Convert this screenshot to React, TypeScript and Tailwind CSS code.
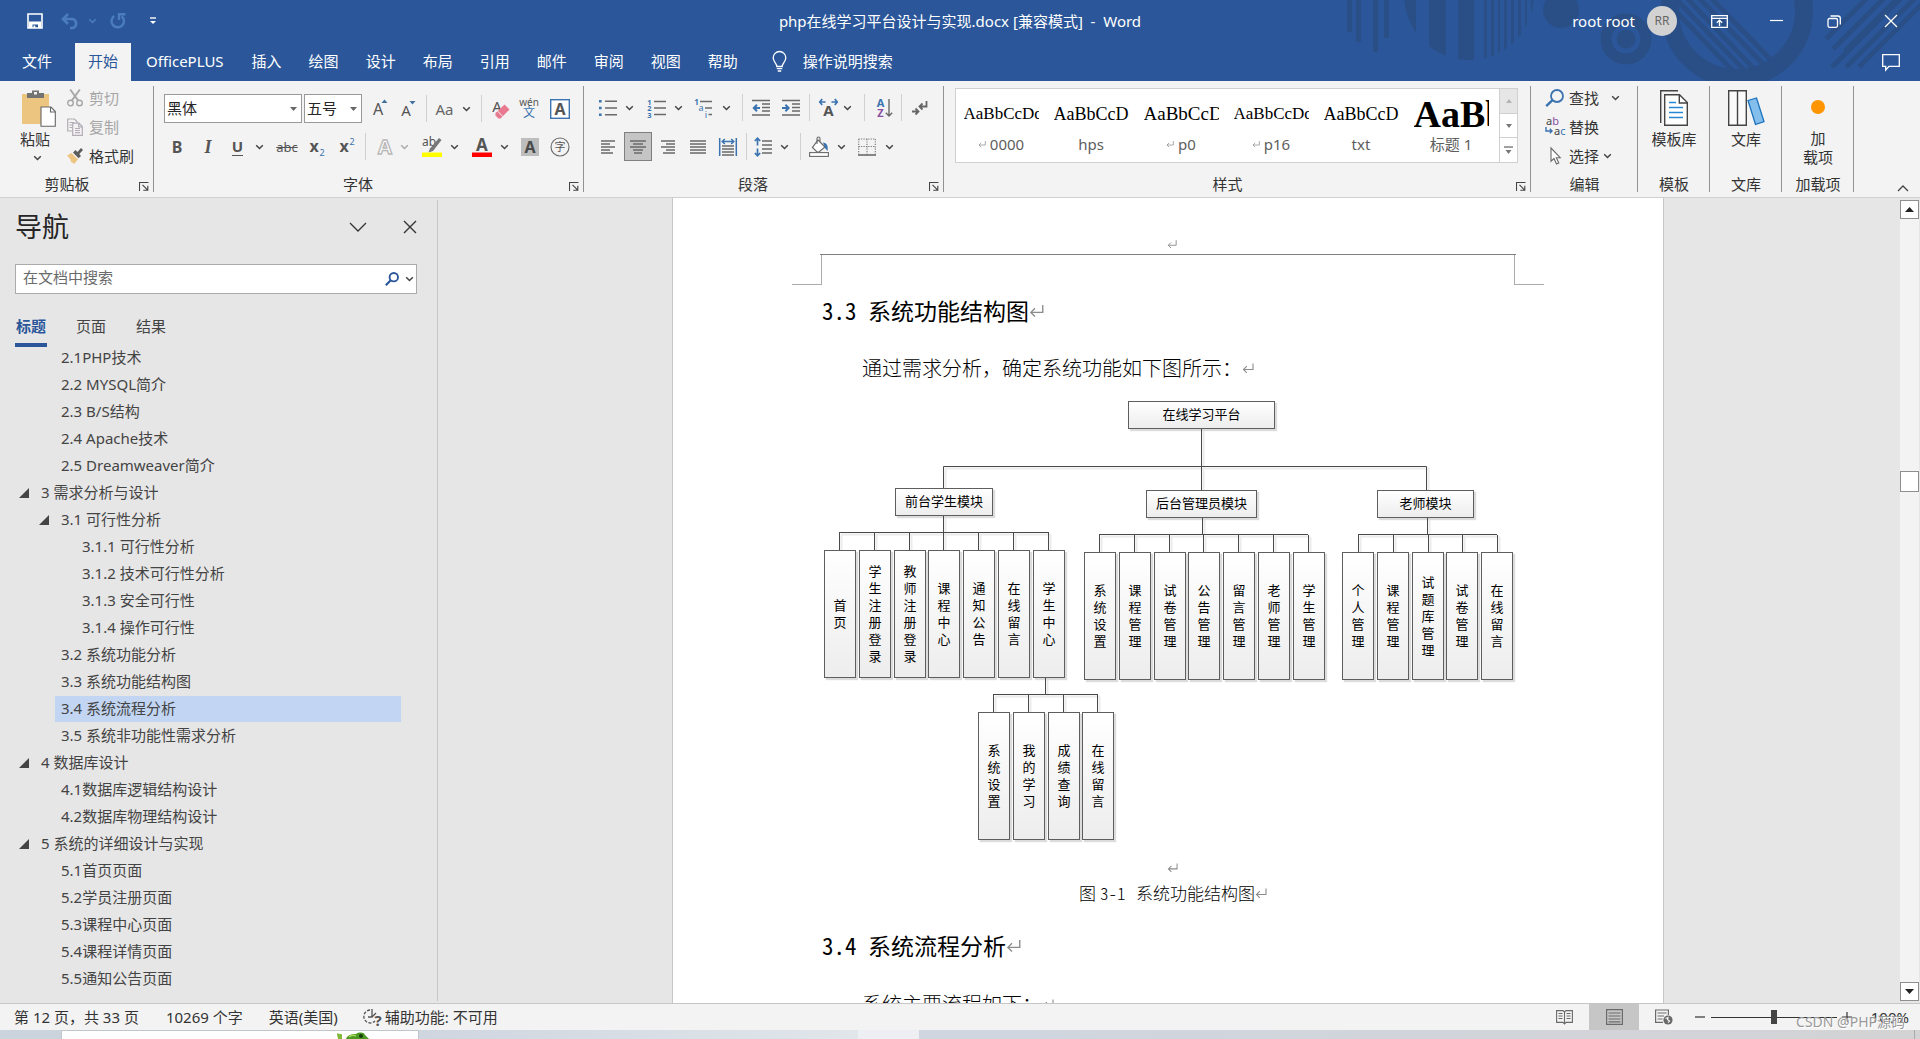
import type { ReactNode } from "react";

const UI = "font-['Noto_Sans','Noto_Sans_CJK_SC',sans-serif]";
const LABEL_FONT = "'Noto Sans','Noto Sans CJK SC',sans-serif";

/* ---------- small shared pieces ---------- */

function Chevron({ className = "text-[#444]" }: { className?: string }) {
  return (
    <svg width="9" height="6" viewBox="0 0 9 6" fill="none" className={`shrink-0 ${className}`} aria-hidden="true">
      <path d="M1.2 1.2 4.5 4.5 7.8 1.2" stroke="currentColor" strokeWidth="1.5" />
    </svg>
  );
}

function Pilcrow({ size = 12 }: { size?: number }) {
  return (
    <svg width={size} height={size} viewBox="0 0 12 12" fill="none" className="shrink-0 text-[#8c8c8c]" aria-hidden="true">
      <path d="M11 1.5V7.5H1.5M4.8 4.2 1.5 7.5 4.8 10.8" stroke="currentColor" strokeWidth="1.1" />
    </svg>
  );
}

function Tool({ label, className, active, gap = "gap-2", children }: { label: string; className: string; active?: boolean; gap?: string; children: ReactNode }) {
  return (
    <button
      type="button"
      aria-label={label}
      title={label}
      className={`flex h-[29px] shrink-0 items-center justify-center ${gap} ${active ? "border border-[#7f7f7f] bg-[#c5c5c5]" : ""} ${className}`}
    >
      {children}
    </button>
  );
}

function Sep({ className = "" }: { className?: string }) {
  return <span className={`h-[27px] w-px shrink-0 bg-[#d0d0d0] ${className}`} />;
}

function Launcher() {
  return (
    <button type="button" aria-label="对话框启动器" className="absolute right-[5px] bottom-[6px]">
      <svg width="10" height="9" viewBox="0 0 10 9" fill="none" stroke="#444" aria-hidden="true">
        <path d="M.5 9V.5H9.5M3.5 2.8 8.5 7.8M8.8 3.8V8.3H4.3" strokeWidth="1.1" />
      </svg>
    </button>
  );
}

function Group({ label, className, launcher, children }: { label: string; className: string; launcher?: boolean; children: ReactNode }) {
  return (
    <section
      aria-label={label}
      className={`relative flex h-full shrink-0 flex-col after:absolute after:top-[5px] after:right-0 after:bottom-[5px] after:w-px after:bg-[#929292] ${className}`}
    >
      <div className="min-h-0 flex-1">{children}</div>
      <div className="h-[24px] text-center leading-[23px]">{label}</div>
      {launcher && <Launcher />}
    </section>
  );
}

function Lines({ d, color = "#6a6a6a" }: { d: string; color?: string }) {
  return <path d={d} stroke={color} strokeWidth="1.4" fill="none" />;
}

function Svg({ w, h, children }: { w: number; h: number; children: ReactNode }) {
  return (
    <svg width={w} height={h} viewBox={`0 0 ${w} ${h}`} fill="none" className="shrink-0 overflow-visible" aria-hidden="true">
      {children}
    </svg>
  );
}

function T({ x, y, s, fill = "#555", bold, children }: { x: number; y: number; s: number; fill?: string; bold?: boolean; children: string }) {
  return (
    <text x={x} y={y} fontSize={s} fill={fill} fontFamily={LABEL_FONT} fontWeight={bold ? 700 : 400} textAnchor="middle">
      {children}
    </text>
  );
}

/* ---------- title bar ---------- */

function Backdrop() {
  const c = "#2a4f86";
  return (
    <svg width="660" height="81" viewBox="0 0 660 81" className="absolute top-0 right-0" aria-hidden="true">
      <defs>
        <clipPath id="disc"><circle cx="209" cy="-5" r="65" /></clipPath>
        <clipPath id="hole"><circle cx="477" cy="12" r="60" /></clipPath>
      </defs>
      <path fill={c} d="M87 0h5v32h-5zM96 0h5v42h-5zM113 0h5v52h-5zM124 0h5v38h-5z" />
      <g clipPath="url(#disc)">
        <path fill={c} d="M144 0h12v60h-12zM169 0h17v60h-17zM198 0h16v61h-16zM224 0h3v60h-3zM231 0h3v60h-3zM238 0h2v60h-2zM244 0h3v60h-3zM251 0h3v60h-3zM258 0h3v60h-3zM265 0h2v60h-2zM271 0h3v60h-3z" />
      </g>
      <circle cx="301" cy="10" r="18" fill={c} />
      <circle cx="366" cy="39" r="20" fill="none" stroke={c} strokeWidth="11" />
      <circle cx="366" cy="39" r="9.5" fill={c} />
      <circle cx="477" cy="11" r="67" fill="none" stroke={c} strokeWidth="18" />
      <g clipPath="url(#hole)" stroke={c} strokeWidth="5">
        <path d="M451-2 515 64M439-2 505 66M427-2 495 70M415-2 485 71M405 0 475 73" />
      </g>
      <g stroke={c} strokeWidth="5">
        <path d="M566 39 607-2M573 49 624-2M585 51 638-2M572 67 641-2M586 67 655-2M599 67 668-2" />
      </g>
    </svg>
  );
}

const TABS = ["插入", "绘图", "设计", "布局", "引用", "邮件", "审阅", "视图", "帮助"];

function Header() {
  return (
    <header className="relative flex h-[81px] shrink-0 flex-col bg-[#2b579a] text-white">
      <Backdrop />
      <div className="relative grid h-[43px] grid-cols-[1fr_auto_1fr] items-center pb-px">
        <div className="flex items-center pl-[27px]">
          <button type="button" aria-label="保存">
            <Svg w={16} h={16}>
              <path d="M1 1H15V15H1Z" stroke="#fff" strokeWidth="1.6" />
              <path d="M2 8.5H14V15H11V11.5H5.5V15H2Z" fill="#fff" />
              <path d="M6.5 12.5H8.3V15H6.5Z" fill="#fff" />
            </Svg>
          </button>
          <button type="button" aria-label="撤消" className="ml-[18px] flex items-center gap-[9px]">
            <Svg w={18} h={16}>
              <path d="M2 6H11.5A4.6 4.6 0 0 1 11.5 15H9M7 1 2 6 7 11" stroke="#4b7cbd" strokeWidth="2.6" />
            </Svg>
            <Chevron className="text-[#4b7cbd]" />
          </button>
          <button type="button" aria-label="恢复" className="ml-[12px]">
            <Svg w={18} h={16}>
              <path d="M5.2 3A6.2 6.2 0 1 0 12.5 3.2" stroke="#4b7cbd" strokeWidth="2.4" />
              <path d="M10 7V1.3H16.5" stroke="#4b7cbd" strokeWidth="2.4" />
            </Svg>
          </button>
          <button type="button" aria-label="自定义快速访问工具栏" className="ml-[23px]">
            <Svg w={6} h={8}>
              <path d="M0 1H6" stroke="#fff" strokeWidth="1.4" />
              <path d="M0 4H6L3 7Z" fill="#fff" />
            </Svg>
          </button>
        </div>
        <h1 className="text-[15px] leading-5 whitespace-pre">php在线学习平台设计与实现.docx [兼容模式]&nbsp; -&nbsp; Word</h1>
        <div className="flex items-center justify-end pr-[22px]">
          <span>root root</span>
          <span className="ml-[12px] flex size-[30px] items-center justify-center rounded-full bg-[#d2d2d2] text-[12px] text-[#666]">RR</span>
          <button type="button" aria-label="功能区显示选项" className="ml-[34px]">
            <Svg w={17} h={13}>
              <path d="M.7.7H16.3V12.3H.7ZM1 3.4H16" stroke="#fff" strokeWidth="1.3" />
              <path d="M8.5 11V5.5M5.8 7.8 8.5 5.2 11.2 7.8" stroke="#fff" strokeWidth="1.3" />
            </Svg>
          </button>
          <button type="button" aria-label="最小化" className="ml-[42px]">
            <Svg w={14} h={13}><path d="M0 5.5H13" stroke="#fff" strokeWidth="1.2" /></Svg>
          </button>
          <button type="button" aria-label="向下还原" className="ml-[43px]">
            <Svg w={15} h={13}>
              <rect x="1" y="3.5" width="9.5" height="8.8" rx="1.5" stroke="#fff" strokeWidth="1.3" />
              <path d="M3.5 1H11A2.3 2.3 0 0 1 13.3 3.3V9.5" stroke="#fff" strokeWidth="1.3" />
            </Svg>
          </button>
          <button type="button" aria-label="关闭" className="ml-[42px]">
            <Svg w={14} h={14}><path d="M1 1 13 13M13 1 1 13" stroke="#fff" strokeWidth="1.3" /></Svg>
          </button>
        </div>
      </div>
      <nav className="relative flex flex-1 items-stretch gap-px" aria-label="功能区选项卡">
        <button type="button" className="px-[22px] pb-[2px]">文件</button>
        <button type="button" className="bg-[#f3f3f3] px-[13px] pb-[2px] text-[#2b579a]">开始</button>
        <button type="button" className="px-[14px] pb-[2px]">OfficePLUS</button>
        {TABS.map((t) => (
          <button key={t} type="button" className="px-[13px] pb-[2px]">{t}</button>
        ))}
        <button type="button" className="ml-5 flex items-center gap-4 pb-[2px]">
          <Svg w={15} h={21}>
            <path d="M4.8 15.5C4.8 12 1.2 11 1.2 6.8A6.2 6.2 0 0 1 13.8 6.8C13.8 11 10.2 12 10.2 15.5Z" stroke="#fff" strokeWidth="1.3" />
            <path d="M4.8 17.7H10.2M5.8 20H9.2" stroke="#fff" strokeWidth="1.3" />
          </Svg>
          操作说明搜索
        </button>
        <button type="button" aria-label="批注" className="mr-5 ml-auto">
          <Svg w={18} h={17}><path d="M.7.7H17.3V12.3H7L3.7 16V12.3H.7Z" stroke="#fff" strokeWidth="1.3" /></Svg>
        </button>
      </nav>
    </header>
  );
}

/* ---------- ribbon ---------- */

function Combo({ label, value, className }: { label: string; value: string; className: string }) {
  return (
    <div className={`relative h-[29px] shrink-0 border border-[#999] bg-white ${className}`}>
      <select aria-label={label} className="h-full w-full appearance-none bg-transparent pb-[2px] pl-[2px] text-[15px] text-[#262626] outline-none">
        <option>{value}</option>
      </select>
      <svg width="7" height="4" viewBox="0 0 7 4" className="pointer-events-none absolute top-3 right-[4px]" aria-hidden="true">
        <path d="M0 0H7L3.5 4Z" fill="#666" />
      </svg>
    </div>
  );
}

function Clipboard() {
  return (
    <Group label="剪贴板" className="w-[154px] [&>div:nth-child(2)]:pr-5" launcher>
      <div className="flex pt-[2px] pl-5">
        <button type="button" className="flex w-[36px] flex-col items-start pt-[6px]">
          <Svg w={36} h={38}>
            <path d="M2 5H29V35H2Z" fill="#ecc681" />
            <path d="M7 9V4H12V1.5H19V4H24V9Z" fill="#737373" />
            <path d="M14 3H17V5.5H14Z" fill="#f3f3f3" />
            <path d="M21 18H31L35.3 22.5V37.3H21Z" fill="#fff" stroke="#666" strokeWidth="1.1" />
            <path d="M30.5 18V23H35.3" stroke="#666" strokeWidth="1.1" />
          </Svg>
          <span className="mt-[2px] leading-5 whitespace-nowrap">粘贴</span>
          <span className="mt-[6px] ml-[13px] flex"><Chevron /></span>
        </button>
        <div className="ml-[11px] flex flex-col">
          <button type="button" disabled className="flex h-[29px] items-center gap-[6px] text-[#a6a6a6]">
            <Svg w={16} h={18}>
              <circle cx="3.5" cy="14" r="2.8" stroke="#a6a6a6" strokeWidth="1.4" />
              <circle cx="12.5" cy="14" r="2.8" stroke="#a6a6a6" strokeWidth="1.4" />
              <path d="M3.2.5 11.2 11.6M12.8.5 4.8 11.6" stroke="#a6a6a6" strokeWidth="1.8" />
            </Svg>
            剪切
          </button>
          <button type="button" disabled className="flex h-[29px] items-center gap-[6px] text-[#a6a6a6]">
            <Svg w={16} h={18}>
              <path d="M10 5V3.5L7.5 1H.7V13H5M2.5 4.5H7M2.5 7H5M2.5 9.5H5" stroke="#b3adb6" strokeWidth="1.2" />
              <path d="M5.7 5.2H12L15.3 8.5V17.3H5.7ZM11.7 5.5V8.8H15M8 10.5H13M8 12.5H13M8 14.7H13" stroke="#b3adb6" strokeWidth="1.2" />
            </Svg>
            复制
          </button>
          <button type="button" className="flex h-[29px] items-center gap-[6px]">
            <Svg w={16} h={16}>
              <path d="M0 7.5 4.5 5 11 11.5 7 16 5.5 14.5 4 14 3.5 11.5Z" fill="#ecc681" />
              <path d="M6 4.5 8.5 2 10.5 4 14 0 16 2 12.3 6 14 8 11.5 10.3Z" fill="#5c5c5c" />
            </Svg>
            格式刷
          </button>
        </div>
      </div>
    </Group>
  );
}

function FontGroup() {
  return (
    <Group label="字体" className="w-[430px] [&>div:nth-child(2)]:pr-[22px]" launcher>
      <div className="flex items-center pt-[13px] pl-[10px]">
        <Combo label="字体" value="黑体" className="w-[138px]" />
        <Combo label="字号" value="五号" className="ml-[2px] w-[58px]" />
        <Tool label="增大字号" className="ml-1 w-7">
          <Svg w={16} h={20}><T x={6} y={16} s={16}>A</T><path d="M9.5 4 12.5.5 15.5 4Z" fill="#41719c" /></Svg>
        </Tool>
        <Tool label="减小字号" className="w-7">
          <Svg w={16} h={20}><T x={6} y={17} s={15}>A</T><path d="M9.5 2 12.5 5.5 15.5 2Z" fill="#41719c" /></Svg>
        </Tool>
        <Sep className="ml-1" />
        <Tool label="更改大小写" className="w-[52px] text-[#666]"><span>Aa</span><Chevron /></Tool>
        <Sep className="ml-[2px]" />
        <Tool label="清除所有格式" className="ml-[5px] w-7">
          <Svg w={20} h={20}>
            <T x={6} y={13} s={15}>A</T>
            <path d="M4.5 14 13.5 5.5 18.5 10.5 9.5 19.5H7.5L4.5 16.5Z" fill="#e8798f" />
            <path d="M6.5 12 11.5 17.2" stroke="#f3f3f3" />
          </Svg>
        </Tool>
        <Tool label="拼音指南" className="w-7">
          <Svg w={20} h={22}><T x={10} y={8} s={10}>wén</T><T x={10} y={19} s={12} fill="#3a73b0">文</T></Svg>
        </Tool>
        <Tool label="字符边框" className="ml-[3px] w-7">
          <Svg w={20} h={20}><rect x=".7" y=".7" width="18.6" height="18.6" fill="#fff" stroke="#3a73b0" strokeWidth="1.4" /><T x={10} y={15.5} s={16} bold>A</T></Svg>
        </Tool>
      </div>
      <div className="mt-[9px] flex items-center pl-[9px]">
        <Tool label="加粗" className="w-7 text-[16px] font-bold text-[#555]">B</Tool>
        <Tool label="倾斜" className="w-[34px] text-[#555]"><span className="font-['Liberation_Serif',serif] text-[18px] font-bold italic">I</span></Tool>
        <Tool label="下划线" gap="gap-3" className="w-[46px] text-[#555]"><span className="border-b border-[#555] text-[15px] leading-[18px] font-bold">U</span><Chevron /></Tool>
        <Tool label="删除线" className="w-8 text-[13px] text-[#555] line-through">abc</Tool>
        <Tool label="下标" className="w-[29px]"><Svg w={17} h={20}><T x={5} y={15} s={16} bold>x</T><T x={13} y={19} s={9} fill="#3a73b0">2</T></Svg></Tool>
        <Tool label="上标" className="w-[30px]"><Svg w={17} h={20}><T x={5} y={15} s={16} bold>x</T><T x={13} y={8} s={9} fill="#3a73b0">2</T></Svg></Tool>
        <Sep className="ml-[3px]" />
        <Tool label="文本效果" gap="gap-[6px]" className="ml-[6px] w-[40px]">
          <Svg w={18} h={20}>
            <text x="9" y="17" fontSize="20" fontWeight="700" textAnchor="middle" fill="#fff" stroke="#b9b9b9" strokeWidth="1.4" fontFamily={LABEL_FONT}>A</text>
          </Svg>
          <Chevron className="text-[#aaa]" />
        </Tool>
        <Tool label="突出显示" className="ml-[7px] w-[42px]">
          <Svg w={20} h={20}>
            <T x={7} y={9} s={12}>ab</T>
            <path d="M17 1 19.5 3 11 14 6.5 15.5 8 11.5Z" fill="#777" />
            <path d="M0 15.5H20V20H0Z" fill="#ffff00" />
          </Svg>
          <Chevron />
        </Tool>
        <Tool label="字体颜色" className="ml-[8px] w-[42px]">
          <Svg w={20} h={20}><T x={10} y={13.5} s={17} bold>A</T><path d="M0 15.5H20V20H0Z" fill="#ff0000" /></Svg>
          <Chevron />
        </Tool>
        <Tool label="字符底纹" className="ml-[5px] w-7">
          <Svg w={18} h={18}><rect width="18" height="18" fill="#bdbdbd" /><T x={9} y={15} s={16} bold fill="#4a4a4a">A</T></Svg>
        </Tool>
        <Tool label="带圈字符" className="ml-[2px] w-7">
          <Svg w={20} h={20}><circle cx="10" cy="10" r="9" stroke="#6a6a6a" strokeWidth="1.1" /><T x={10} y={14} s={11}>字</T></Svg>
        </Tool>
      </div>
    </Group>
  );
}

function ParagraphGroup() {
  return (
    <Group label="段落" className="w-[360px] [&>div:nth-child(2)]:pr-[22px]" launcher>
      <div className="flex items-center pt-[12px] pl-[14px]">
        <Tool label="项目符号" className="w-9">
          <Svg w={18} h={18}>
            <path d="M0 1h2.6v2.6H0zM0 7.7h2.6v2.6H0zM0 14.4h2.6V17H0z" fill="#3a73b0" />
            <Lines d="M6 2.3H18M6 9H18M6 15.7H18" />
          </Svg>
          <Chevron />
        </Tool>
        <Tool label="编号" className="ml-[13px] w-9">
          <Svg w={19} h={20}>
            <T x={2.5} y={7} s={7.5} fill="#3a73b0" bold>1</T><T x={2.5} y={13.4} s={7.5} fill="#3a73b0" bold>2</T><T x={2.5} y={19.8} s={7.5} fill="#3a73b0" bold>3</T>
            <Lines d="M7 3.5H19M7 10H19M7 16.5H19" />
          </Svg>
          <Chevron />
        </Tool>
        <Tool label="多级列表" className="ml-[11px] w-9">
          <Svg w={20} h={20}>
            <T x={2.5} y={7} s={8} fill="#3a73b0" bold>1</T><T x={7} y={13} s={9} fill="#3a73b0">a</T><T x={12} y={19.5} s={9} fill="#3a73b0">i</T>
            <Lines d="M6 3.5H18M11 10H18M14.5 16.5H18" />
          </Svg>
          <Chevron />
        </Tool>
        <Sep className="ml-[12px]" />
        <Tool label="减少缩进量" className="ml-1 w-7">
          <Svg w={18} h={18}><Lines d="M0 1.5H18M10 5H18M10 8.5H18M10 12H18M0 16H18" /><path d="M8 9H2M5 5.8 1.8 9 5 12.2" stroke="#3a73b0" strokeWidth="2" /></Svg>
        </Tool>
        <Tool label="增加缩进量" className="ml-[2px] w-7">
          <Svg w={18} h={18}><Lines d="M0 1.5H18M10 5H18M10 8.5H18M10 12H18M0 16H18" /><path d="M0 9H6M3.4 5.8 6.6 9 3.4 12.2" stroke="#3a73b0" strokeWidth="2" /></Svg>
        </Tool>
        <Sep className="ml-[4px]" />
        <Tool label="中文版式" gap="gap-[5px]" className="ml-[5px] w-[40px]">
          <Svg w={19} h={20}>
            <T x={9.5} y={18} s={15} bold>A</T>
            <path d="M0 4H6.5M3.2 1 .8 4 3.2 7M19 4H12.5M15.8 1 18.2 4 15.8 7" stroke="#3a73b0" strokeWidth="1.7" />
          </Svg>
          <Chevron />
        </Tool>
        <Sep className="ml-[9px]" />
        <Tool label="排序" className="ml-[5px] w-7">
          <Svg w={17} h={20}>
            <T x={4.5} y={9} s={11} fill="#3a73b0" bold>A</T><T x={4.5} y={19} s={11} fill="#8a4fa3" bold>Z</T>
            <Lines d="M13 1V18M9.8 14.8 13 18 16.2 14.8" />
          </Svg>
        </Tool>
        <Sep className="ml-[3px]" />
        <Tool label="显示编辑标记" className="ml-[3px] w-7">
          <Svg w={17} h={16}>
            <path d="M15.5 1V6.5H9M11.5 3.5 8.5 6.5 11.5 9.5" stroke="#666" strokeWidth="1.8" />
            <path d="M1 11.5H7M4.5 8.5 7.5 11.5 4.5 14.5" stroke="#666" strokeWidth="1.8" />
          </Svg>
        </Tool>
      </div>
      <div className="mt-[10px] flex items-center pl-[10px]">
        <Tool label="左对齐" className="w-7"><Svg w={14} h={14}><Lines d="M0 1H14M0 4H9M0 7H14M0 10H9M0 13H12" /></Svg></Tool>
        <Tool label="居中" className="ml-[2px] w-7" active><Svg w={16} h={14}><Lines d="M0 1H16M3 4H13M0 7H16M3 10H13M4 13H12" /></Svg></Tool>
        <Tool label="右对齐" className="ml-[2px] w-7"><Svg w={14} h={14}><Lines d="M0 1H14M5 4H14M0 7H14M5 10H14M2 13H14" /></Svg></Tool>
        <Tool label="两端对齐" className="ml-[2px] w-7"><Svg w={16} h={14}><Lines d="M0 1H16M0 4H16M0 7H16M0 10H16M0 13H16" /></Svg></Tool>
        <Tool label="分散对齐" className="ml-[2px] w-7">
          <Svg w={18} h={18}>
            <path d="M.7 0V18M17.3 0V18M3 3.5H15M5.8 1 3.2 3.5 5.8 6M12.2 1 14.8 3.5 12.2 6" stroke="#3a73b0" strokeWidth="1.5" />
            <Lines d="M3 8H15M3 11H15M3 14H15M3 17H15" />
          </Svg>
        </Tool>
        <Sep className="ml-[4px]" />
        <Tool label="行和段落间距" className="ml-[4px] w-[40px]">
          <Svg w={18} h={20}>
            <path d="M3.5 1V8.5M3.5 11.5V19M.8 4 3.5 1.2 6.2 4M.8 16 3.5 18.8 6.2 16" stroke="#3a73b0" strokeWidth="1.7" />
            <Lines d="M8 4H18M8 8H18M8 12H18M8 16H18" />
          </Svg>
          <Chevron />
        </Tool>
        <Sep className="ml-[9px]" />
        <Tool label="底纹" className="ml-[5px] w-[42px]">
          <Svg w={20} h={20}>
            <path d="M9 3 16 10 10 15H8L3.5 10.5Z" fill="#fff" stroke="#6a6a6a" strokeWidth="1.2" />
            <path d="M8 7V1.5A1.2 1.2 0 0 1 11 1.5V5" stroke="#6a6a6a" strokeWidth="1.1" />
            <path d="M14 5.5C17.5 5.5 19.5 9 18.5 14L16 11Z" fill="#3a73b0" />
            <rect x=".6" y="15.6" width="18.8" height="3.8" fill="#fff" stroke="#6a6a6a" strokeWidth="1.1" />
          </Svg>
          <Chevron />
        </Tool>
        <Tool label="边框" gap="gap-[9px]" className="ml-[7px] w-[42px]">
          <Svg w={18} h={18}>
            <path d="M.7 1H17.3M.7 8.5H17.3M.7 1V16M9 1V16M17.3 1V16" stroke="#777" strokeWidth="1.1" strokeDasharray="1.2 1.2" />
            <path d="M0 17H18" stroke="#555" strokeWidth="1.4" />
          </Svg>
          <Chevron />
        </Tool>
      </div>
    </Group>
  );
}

const STYLES = [
  { name: "0000", mark: true, sample: "AaBbCcDd", cls: "text-[17px]" },
  { name: "hps", mark: false, sample: "AaBbCcDd", cls: "text-[18px]" },
  { name: "p0", mark: true, sample: "AaBbCcDd", cls: "text-[19px]" },
  { name: "p16", mark: true, sample: "AaBbCcDd", cls: "text-[17px]" },
  { name: "txt", mark: false, sample: "AaBbCcDd", cls: "text-[18px]" },
  { name: "标题 1", mark: false, sample: "AaBbC", cls: "text-[38px] font-bold" },
];

function StylesGroup() {
  return (
    <Group label="样式" className="min-w-0 flex-1 [&>div:nth-child(2)]:pr-5" launcher>
      <div className="mt-[7px] mr-[13px] ml-[11px] flex h-[75px] border border-[#d0d0d0] bg-white">
        <div className="flex min-w-0 flex-1 overflow-hidden">
          {STYLES.map((s) => (
            <button key={s.name} type="button" className="flex w-[90px] shrink-0 flex-col items-center">
              <span className="flex h-[44px] w-[75px] items-center overflow-hidden">
                <span className={`pt-[5px] leading-[42px] whitespace-nowrap text-black font-['Liberation_Serif',serif] ${s.cls}`}>{s.sample}</span>
              </span>
              <span className="flex items-center gap-1 leading-[22px] text-[#5e5e5e]">
                {s.mark && <Pilcrow size={8} />}
                {s.name}
              </span>
            </button>
          ))}
        </div>
        <div className="flex w-[18px] flex-col border-l border-[#d0d0d0]">
          <button type="button" aria-label="上一行" className="flex flex-1 items-center justify-center bg-[#e6e6e6]"><Svg w={6} h={4}><path d="M0 4 3 0 6 4Z" fill="#b5b5b5" /></Svg></button>
          <button type="button" aria-label="下一行" className="flex flex-1 items-center justify-center border-y border-[#d0d0d0]"><Svg w={6} h={4}><path d="M0 0H6L3 4Z" fill="#777" /></Svg></button>
          <button type="button" aria-label="其他" className="flex flex-1 items-center justify-center"><Svg w={9} h={8}><path d="M0 1H9" stroke="#777" strokeWidth="1.4" /><path d="M1.5 4H7.5L4.5 8Z" fill="#777" /></Svg></button>
        </div>
      </div>
    </Group>
  );
}

function TrailingGroups() {
  return (
    <>
      <Group label="编辑" className="w-[107px]">
        <div className="flex flex-col pt-[2px] pl-[14px]">
          <button type="button" className="flex h-[29px] items-center gap-[4px]">
            <Svg w={20} h={18}><circle cx="12" cy="7" r="6" stroke="#3a73b0" strokeWidth="1.8" /><path d="M7.5 11.2 1.2 17.2" stroke="#3a73b0" strokeWidth="2.4" /></Svg>
            查找<span className="ml-2 flex"><Chevron /></span>
          </button>
          <button type="button" className="flex h-[29px] items-center gap-[4px]">
            <Svg w={20} h={20}>
              <text x="1" y="8" fontSize="11" fontFamily={LABEL_FONT} fill="#444">a<tspan fill="#8a4fa3">b</tspan></text>
              <text x="9" y="18" fontSize="11" fontFamily={LABEL_FONT} fill="#444">a<tspan fill="#3a73b0">c</tspan></text>
              <path d="M1 10V14H7M4.8 11.8 7 14 4.8 16.2" stroke="#3a73b0" strokeWidth="1.4" />
            </Svg>
            替换
          </button>
          <button type="button" className="flex h-[29px] items-center gap-[4px]">
            <Svg w={20} h={18}><path d="M6 1V14.2L9 11.5 11.5 17 13.8 16 11.3 10.7H15.2Z" fill="#fff" stroke="#6a6a6a" strokeWidth="1.1" /></Svg>
            选择<Chevron />
          </button>
        </div>
      </Group>
      <Group label="模板" className="w-[72px]">
        <button type="button" className="flex w-full flex-col items-center pt-[9px]">
          <Svg w={28} h={36}>
            <path d="M.7 33V.7H18" stroke="#444" strokeWidth="1.4" />
            <path d="M4.7 4.7H19.5L27.3 12.5V35.3H4.7Z" fill="#fff" stroke="#444" strokeWidth="1.4" />
            <path d="M19.3 4.7V13H27.3" stroke="#444" strokeWidth="1.4" />
            <path d="M9 12.5H16M9 17.5H23M9 22.5H23M9 27.5H23" stroke="#2a86d1" strokeWidth="1.3" />
          </Svg>
          <span className="mt-[3px] leading-5">模板库</span>
        </button>
      </Group>
      <Group label="文库" className="w-[72px]">
        <button type="button" className="flex w-full flex-col items-center pt-[9px]">
          <Svg w={37} h={36}>
            <path d="M.7.7H18.3V35.3H.7ZM9.5.7V35.3" fill="#fafafa" stroke="#444" strokeWidth="1.4" />
            <path d="M20 10.5 28.5 8 36 31.5 27.5 34.5Z" fill="#83beec" stroke="#1a72bd" strokeWidth="1.3" />
          </Svg>
          <span className="mt-[3px] leading-5">文库</span>
        </button>
      </Group>
      <Group label="加载项" className="w-[72px]">
        <button type="button" className="flex w-full flex-col items-center pt-[19px]">
          <span className="size-[14px] rounded-full bg-[#ff9500]" />
          <span className="mt-[15px] leading-[19px]">加<br />载项</span>
        </button>
      </Group>
      <div className="flex w-[66px] shrink-0 items-end justify-end pr-[11px] pb-[5px]">
        <button type="button" aria-label="折叠功能区"><Svg w={12} h={7}><path d="M1 6 6 1 11 6" stroke="#444" strokeWidth="1.3" /></Svg></button>
      </div>
    </>
  );
}

/* ---------- navigation pane ---------- */

type Row = { text: string; level: number; open?: boolean; selected?: boolean };
const OUTLINE: Row[] = [
  { text: "2.1PHP技术", level: 2 },
  { text: "2.2 MYSQL简介", level: 2 },
  { text: "2.3 B/S结构", level: 2 },
  { text: "2.4 Apache技术", level: 2 },
  { text: "2.5 Dreamweaver简介", level: 2 },
  { text: "3 需求分析与设计", level: 1, open: true },
  { text: "3.1 可行性分析", level: 2, open: true },
  { text: "3.1.1 可行性分析", level: 3 },
  { text: "3.1.2 技术可行性分析", level: 3 },
  { text: "3.1.3 安全可行性", level: 3 },
  { text: "3.1.4 操作可行性", level: 3 },
  { text: "3.2 系统功能分析", level: 2 },
  { text: "3.3 系统功能结构图", level: 2 },
  { text: "3.4 系统流程分析", level: 2, selected: true },
  { text: "3.5 系统非功能性需求分析", level: 2 },
  { text: "4 数据库设计", level: 1, open: true },
  { text: "4.1数据库逻辑结构设计", level: 2 },
  { text: "4.2数据库物理结构设计", level: 2 },
  { text: "5 系统的详细设计与实现", level: 1, open: true },
  { text: "5.1首页页面", level: 2 },
  { text: "5.2学员注册页面", level: 2 },
  { text: "5.3课程中心页面", level: 2 },
  { text: "5.4课程详情页面", level: 2 },
  { text: "5.5通知公告页面", level: 2 },
];
const INDENT: Record<number, string> = { 1: "ml-[19px]", 2: "ml-[39px]", 3: "ml-[60px]" };

function NavPane() {
  return (
    <aside className="my-[2px] flex w-[438px] shrink-0 flex-col overflow-hidden border-r border-[#c6c6c6] text-[#444]">
      <div className="flex h-[64px] shrink-0 items-center pr-[20px] pb-[10px] pl-[15px]">
        <h2 className="text-[27px] leading-[34px] text-[#262626]">导航</h2>
        <button type="button" aria-label="任务窗格选项" className="ml-auto"><Svg w={18} h={10}><path d="M1 1 9 9 17 1" stroke="#333" strokeWidth="1.3" /></Svg></button>
        <button type="button" aria-label="关闭窗格" className="ml-[36px]"><Svg w={14} h={14}><path d="M1 1 13 13M13 1 1 13" stroke="#333" strokeWidth="1.4" /></Svg></button>
      </div>
      <div className="mr-5 ml-[15px] flex h-[30px] shrink-0 items-center border border-[#ababab] bg-white pr-[2px]">
        <input type="text" aria-label="在文档中搜索" placeholder="在文档中搜索" className="h-full min-w-0 flex-1 bg-transparent pb-[4px] pl-[7px] text-[15px] outline-none placeholder:text-[#6a6a6a]" />
        <button type="button" aria-label="搜索" className="mr-[6px]">
          <Svg w={14} h={14}><circle cx="8.8" cy="5.2" r="4.2" stroke="#2b579a" strokeWidth="1.9" /><path d="M5.8 8.2.8 13.2" stroke="#2b579a" strokeWidth="2.2" /></Svg>
        </button>
        <button type="button" aria-label="搜索选项"><Chevron /></button>
      </div>
      <div role="tablist" className="mt-[17px] flex h-[36px] shrink-0 pl-[15px]">
        <button type="button" role="tab" aria-selected="true" className="w-8 border-b-4 border-[#2b579a] pb-[3px] font-bold text-[#2b579a]">标题</button>
        <button type="button" role="tab" aria-selected="false" className="ml-7 w-8 pb-[7px]">页面</button>
        <button type="button" role="tab" aria-selected="false" className="ml-7 w-8 pb-[7px]">结果</button>
      </div>
      <ul className="-mt-[2px] min-h-0 flex-1">
        {OUTLINE.map((r) => (
          <li key={r.text} className="flex h-[27px] items-start">
            <span className={`flex h-[26px] w-[16px] shrink-0 items-center ${INDENT[r.level]}`}>
              {r.open && <Svg w={10} h={10}><path d="M10 0V10H0Z" fill="#444" /></Svg>}
            </span>
            <a href="#outline" className={`mr-9 h-[26px] flex-1 pl-[6px] leading-[24px] ${r.selected ? "bg-[#c2d5f2]" : ""}`}>{r.text}</a>
          </li>
        ))}
      </ul>
    </aside>
  );
}

/* ---------- document ---------- */

type Node = { text: string; x: number; y: number; w: number; h: number; tall?: boolean };

const column = (names: string[], x0: number, y: number): Node[] =>
  names.map((text, i) => ({ text, x: Math.round(x0 + i * 34.8), y, w: 32, h: 128, tall: true }));

const NODES: Node[] = [
  { text: "在线学习平台", x: 306, y: 0, w: 147, h: 28 },
  { text: "前台学生模块", x: 73, y: 87, w: 98, h: 28 },
  { text: "后台管理员模块", x: 324, y: 89, w: 111, h: 28 },
  { text: "老师模块", x: 555, y: 89, w: 97, h: 28 },
  ...column(["首页", "学生注册登录", "教师注册登录", "课程中心", "通知公告", "在线留言", "学生中心"], 2, 149),
  ...column(["系统设置", "课程管理", "试卷管理", "公告管理", "留言管理", "老师管理", "学生管理"], 262, 151),
  ...column(["个人管理", "课程管理", "试题库管理", "试卷管理", "在线留言"], 520, 151),
  ...column(["系统设置", "我的学习", "成绩查询", "在线留言"], 156, 311),
];

const drops = (x0: number, n: number, y: number) =>
  Array.from({ length: n }, (_, i) => `M${Math.round(x0 + i * 34.8) + 0.5} ${y}V${y + 17}`).join("");

const WIRES = [
  "M379.5 28V89M121.5 87V65.5H604.5V89",
  "M121.5 115V132M17 131.5H227", drops(17, 7, 132),
  "M380.5 117V134M277 133.5H486", drops(277, 7, 134),
  "M605.5 117V134M536 133.5H675", drops(536, 5, 134),
  "M223.5 277V294M171 293.5H276", drops(171, 4, 294),
].join("");

function Diagram() {
  return (
    <div className="relative mt-[17px] h-[440px] text-[13px] text-black">
      <svg width="692" height="440" viewBox="0 0 692 440" fill="none" className="absolute inset-0" aria-hidden="true">
        <path d={WIRES} transform="translate(2 2)" stroke="#ececec" strokeWidth="2" />
      </svg>
      {NODES.map((n) => (
        <div
          key={`${n.text}-${n.x}`}
          className="absolute flex items-center justify-center border border-[#5e5e5e] bg-linear-to-b from-white to-[#ededed] pb-[2px] shadow-[2px_2px_1px_#dcdcdc]"
          style={{ left: n.x, top: n.y, width: n.w, height: n.h }}
        >
          <span className={n.tall ? "w-[13px] leading-[17px] break-all" : "leading-5 whitespace-nowrap"}>{n.text}</span>
        </div>
      ))}
      <svg width="692" height="440" viewBox="0 0 692 440" fill="none" className="pointer-events-none absolute inset-0" aria-hidden="true">
        <path d={WIRES} stroke="#4a4a4a" />
      </svg>
    </div>
  );
}

function Heading({ no, className, children }: { no: string; className: string; children: string }) {
  return (
    <h3 className={`flex items-center text-[23px] leading-8 whitespace-pre text-black ${className}`}>
      <span className="[font-feature-settings:'hwid']">{no} </span>
      {children}
      <Pilcrow size={15} />
    </h3>
  );
}

function Document() {
  return (
    <main className="flex min-w-0 flex-1 justify-center overflow-hidden pr-[2px]">
      <article className="h-[1100px] w-[992px] shrink-0 border-r border-l border-[#c6c6c6] bg-white px-[149px] pt-[37px] font-['Noto_Sans_CJK_SC',sans-serif]">
        <div className="-mx-[2px] flex h-5 items-center justify-center border-b border-[#7f7f7f] pb-px pl-2"><Pilcrow size={10} /></div>
        <div className="-mx-[30px] flex justify-between">
          <span className="h-[30px] w-[30px] border-r border-b border-[#ababab]" />
          <span className="h-[30px] w-[30px] border-b border-l border-[#ababab]" />
        </div>
        <Heading no="3.3" className="mt-[9px]">系统功能结构图</Heading>
        <p className="mt-[26px] flex items-center pl-[40px] text-[20px] leading-8 font-light text-black">
          通过需求分析，确定系统功能如下图所示：<Pilcrow size={12} />
        </p>
        <Diagram />
        <div className="mt-[14px] flex h-6 items-center justify-center pl-2"><Pilcrow size={11} /></div>
        <p className="mt-[2px] flex items-center justify-center pl-[10px] text-[17px] leading-6 font-light whitespace-pre text-black">
          图<span className="mr-[2px] ml-1 [font-feature-settings:'hwid']">3-1 </span>系统功能结构图<Pilcrow size={12} />
        </p>
        <Heading no="3.4" className="mt-6">系统流程分析</Heading>
        <p className="mt-[27px] flex items-center pl-[40px] text-[20px] leading-8 font-light text-black">
          系统主要流程如下：<Pilcrow size={12} />
        </p>
      </article>
    </main>
  );
}

function ScrollBar() {
  return (
    <div className="my-[2px] mr-px flex w-[19px] shrink-0 flex-col bg-[#f3f3f3]">
      <button type="button" aria-label="向上滚动" className="flex h-[19px] items-center justify-center border border-[#8f8f8f] bg-white"><Svg w={9} h={5}><path d="M0 5 4.5 0 9 5Z" fill="#222" /></Svg></button>
      <div className="flex flex-1 flex-col">
        <div className="flex-[252]" />
        <div className="h-[21px] border border-[#8f8f8f] bg-white" />
        <div className="flex-[490]" />
      </div>
      <button type="button" aria-label="向下滚动" className="flex h-[19px] items-center justify-center border border-[#8f8f8f] bg-white"><Svg w={9} h={5}><path d="M0 0H9L4.5 5Z" fill="#222" /></Svg></button>
    </div>
  );
}

/* ---------- status bar and taskbar ---------- */

function StatusBar() {
  return (
    <footer className="relative flex h-[27px] shrink-0 items-center border-t border-[#c6c6c6] bg-[#f3f3f3] pl-[14px]">
      <button type="button">第 12 页，共 33 页</button>
      <button type="button" className="ml-[27px]">10269 个字</button>
      <button type="button" className="ml-[26px]">英语(美国)</button>
      <button type="button" className="ml-[25px] flex items-center gap-[2px]">
        <Svg w={20} h={18}>
          <path d="M7 2A6.5 6.5 0 1 0 12 13" stroke="#555" strokeWidth="1.3" strokeDasharray="3 1.5" />
          <path d="M9 1V9H5M9 9 13 5" stroke="#555" strokeWidth="1.3" />
          <T x={15} y={18} s={15} bold>?</T>
        </Svg>
        辅助功能: 不可用
      </button>
      <div className="ml-auto flex h-full items-center">
        <button type="button" aria-label="阅读视图" className="flex h-full w-[50px] items-center justify-center">
          <Svg w={17} h={16}><path d="M.6 1.6H7L8.5 3 10 1.6H16.4V13.4H10L8.5 15 7 13.4H.6ZM8.5 3V15M2.5 4.5H6.5M2.5 7H6.5M2.5 9.5H6.5M10.5 4.5H14.5M10.5 7H14.5M10.5 9.5H14.5" stroke="#6a6a6a" strokeWidth="1.1" /></Svg>
        </button>
        <button type="button" aria-label="页面视图" className="flex h-full w-[50px] items-center justify-center bg-[#c6c6c6]">
          <Svg w={17} h={16}><path d="M.6.6H16.4V15.4H.6ZM2.5 4H14.5M2.5 7H14.5M2.5 10H14.5M2.5 12.8H14.5" stroke="#6a6a6a" strokeWidth="1.2" /></Svg>
        </button>
        <button type="button" aria-label="Web 版式视图" className="flex h-full w-[50px] items-center justify-center">
          <Svg w={18} h={16}>
            <path d="M8 13.4H.6V1H13.4V6M2.5 4H11.5M2.5 7H9M2.5 10H7.5" stroke="#6a6a6a" strokeWidth="1.2" />
            <circle cx="13" cy="11" r="4.6" fill="#6a6a6a" />
            <path d="M10.5 9.5 13 8.5 12.5 10.5 14.5 12 13 13.5" stroke="#f3f3f3" strokeWidth="1.2" />
          </Svg>
        </button>
        <button type="button" aria-label="缩小" className="ml-[6px]"><Svg w={11} h={11}><path d="M0 5H10" stroke="#333" strokeWidth="1.2" /></Svg></button>
        <input
          type="range"
          aria-label="缩放"
          defaultValue={50}
          className="mx-[5px] h-[14px] w-[126px] appearance-none bg-transparent bg-linear-to-b from-[#333] to-[#333] bg-[length:100%_1px] bg-center bg-no-repeat [&::-webkit-slider-thumb]:h-[14px] [&::-webkit-slider-thumb]:w-[6px] [&::-webkit-slider-thumb]:appearance-none [&::-webkit-slider-thumb]:bg-[#444]"
        />
        <button type="button" aria-label="放大"><Svg w={11} h={11}><path d="M0 5H10M5 0V10" stroke="#333" strokeWidth="1.2" /></Svg></button>
        <button type="button" className="mr-[11px] ml-4 w-[40px] text-right">100%</button>
      </div>
      <span className="pointer-events-none absolute top-[8px] right-[15px] text-[14px] leading-5 whitespace-nowrap text-[#999] [text-shadow:1px_1px_0_#fff]">CSDN @PHP源码</span>
    </footer>
  );
}

function Taskbar() {
  return (
    <div className="flex h-[9px] shrink-0 overflow-hidden bg-linear-to-r from-[#cbd4dd] via-[#d0d6e0] to-[#d3d3d5]">
      <div className="ml-[61px] flex w-[358px] shrink-0 justify-end border-x border-t border-[#c0c6cc] bg-white pr-12">
        <Svg w={34} h={8}>
          <path d="M1 3C1 1 4 4 6 3V8H2Z" fill="#7fb83a" />
          <path d="M10 8C11 4 16 3 20 3C23 1 28 1 29 4L33 8Z" fill="#4c9a23" />
          <circle cx="25" cy="5" r="2" fill="#173b0c" />
          <path d="M13 6C15 4 18 4 20 5" stroke="#a6d65c" strokeWidth="1.5" />
        </Svg>
      </div>
      <div className="w-[439px] bg-linear-to-r from-[#cfd6e0] to-[#e0e6ea]" />
      <div className="w-[61px] bg-[#eeeff3]" />
      <div className="flex flex-1 justify-end pr-[88px] text-[13px] leading-4 text-[#222]">
        <span className="mt-[5px]">10:10</span>
      </div>
      <div className="mr-[5px] w-px bg-[#aaa]" />
    </div>
  );
}

export default function App() {
  return (
    <div className={`flex h-screen flex-col overflow-hidden bg-[#e6e6e6] text-[15px] leading-5 text-[#333] ${UI}`}>
      <Header />
      <div className="flex h-[117px] shrink-0 border-b border-[#d0d0d0] bg-[#f3f3f3]">
        <Clipboard />
        <FontGroup />
        <ParagraphGroup />
        <StylesGroup />
        <TrailingGroups />
      </div>
      <div className="flex min-h-0 flex-1">
        <NavPane />
        <Document />
        <ScrollBar />
      </div>
      <StatusBar />
      <Taskbar />
    </div>
  );
}
